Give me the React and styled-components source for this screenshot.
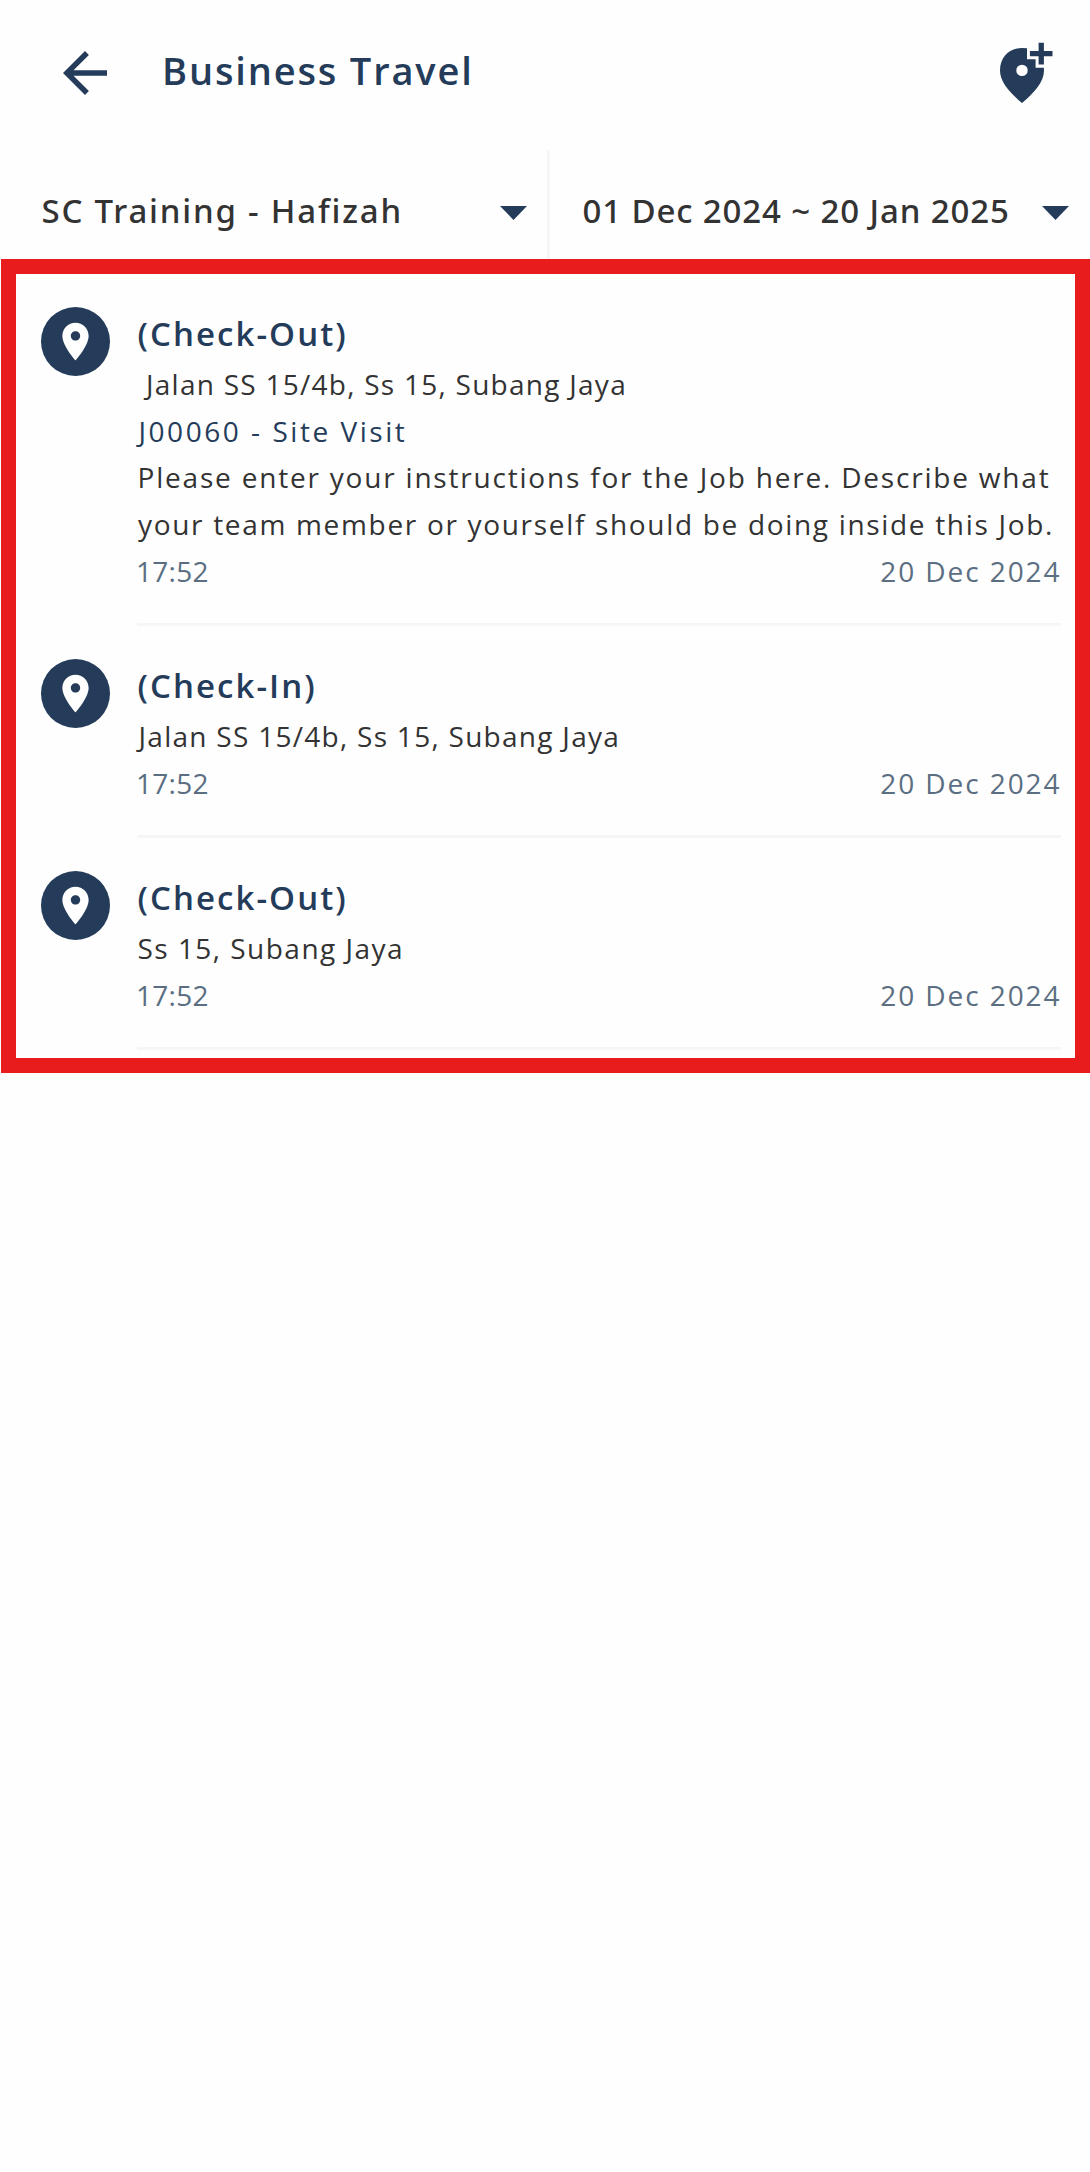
import React from "react";
import styled, { createGlobalStyle } from "styled-components";

const NAVY = "#243c5a";

const GlobalStyle = createGlobalStyle`
  * { box-sizing: border-box; }
  body {
    margin: 0;
    background: #fefefe;
    color: #333333;
    font-family: "Open Sans", "Noto Sans", sans-serif;
  }
`;

const Screen = styled.main`
  width: 1090px;
  min-height: 2172px;
  background: #fefefe;
`;

const Header = styled.header`
  display: flex;
  align-items: flex-start;
  height: 150px;
  padding: 40px 37px 0 52px;
`;

const IconButton = styled.button`
  display: block;
  flex: none;
  padding: 0;
  border: 0;
  background: none;
  color: ${NAVY};
  line-height: 0;
`;

const Title = styled.h1`
  flex: 1;
  margin: 0 0 0 44px;
  font-size: 38px;
  font-weight: 600;
  line-height: 60px;
  letter-spacing: 1.85px;
  color: ${NAVY};
`;

const Filters = styled.div`
  display: grid;
  grid-template-columns: 547px 1fr;
  height: 109px;
`;

const Filter = styled.button`
  display: flex;
  align-items: center;
  justify-content: space-between;
  padding: 12px ${(p) => p.$right}px 0 ${(p) => p.$left}px;
  border: 0;
  border-left: ${(p) => (p.$divided ? "3px solid #f6f6f6" : "0")};
  background: none;
  color: #333333;
  font: 500 33px/50px "Noto Sans", "Open Sans", sans-serif;
  letter-spacing: ${(p) => p.$tracking}px;
  white-space: nowrap;
`;

const Caret = styled.svg`
  flex: none;
  width: 27px;
  height: 14px;
  margin-top: 5px;
  fill: ${NAVY};
`;

const List = styled.ul`
  height: 814px;
  margin: 0 0 0 1px;
  padding: 0 14px 0 25px;
  border: 15px solid #e81c1c;
  list-style: none;
`;

const Item = styled.li`
  display: flex;
  gap: 27px;
  padding-top: 33px;
`;

const Badge = styled.span`
  display: flex;
  flex: none;
  align-items: center;
  justify-content: center;
  width: 69px;
  height: 69px;
  border-radius: 50%;
  background: ${NAVY};
`;

const Body = styled.div`
  flex: 1;
  min-width: 0;
  padding-bottom: 28.67px;
  border-bottom: 3px solid #f6f6f6;
`;

const Status = styled.h2`
  margin: 0;
  padding: 0 0 1px 0.5px;
  font-size: 33px;
  font-weight: 600;
  line-height: 53px;
  letter-spacing: 2.05px;
  color: ${NAVY};
`;

const Line = styled.p`
  margin: 0;
  padding-left: ${(p) => p.$indent || 0}px;
  font-size: 28px;
  line-height: 46.67px;
  letter-spacing: ${(p) => p.$tracking}px;
  white-space: nowrap;
  color: ${(p) => (p.$job ? NAVY : "#333333")};
`;

const Meta = styled.div`
  display: flex;
  justify-content: space-between;
  font-size: 28px;
  line-height: 46.67px;
  color: #5b6e82;
`;

const Time = styled.time`
  letter-spacing: ${(p) => p.$tracking}px;
  margin: 0 -0.5px 0 -1px;
`;

const BackIcon = () => (
  <svg width="66" height="66" viewBox="0 0 24 24" fill="currentColor">
    <path d="M20 11H7.83l5.59-5.59L12 4l-8 8 8 8 1.41-1.41L7.83 13H20v-2z" />
  </svg>
);

const AddPlaceIcon = () => (
  <svg width="53" height="64" viewBox="1000 40 53 64" fill="currentColor">
    <path
      fillRule="evenodd"
      d="M1027 48.3V59.2H1035.6V67.8H1043.8Q1044 69 1044 70.5C1044 82 1034 93 1022 103C1010 93 1000 82 1000 70.5C1000 57 1009.500 48 1022 48Q1025 48 1027 48.300ZM1022 64.700A5.700 5.700 0 1 0 1022 76.100A5.700 5.700 0 1 0 1022 64.700Z"
    />
    <path d="M1038.600 42.700h5.300v8.300h8.600v5.200h-8.600v8.300h-5.300v-8.300h-8.700v-5.200h8.700z" />
  </svg>
);

const PlaceIcon = () => (
  <svg width="45" height="45" viewBox="0 0 24 24" fill="#ffffff">
    <path d="M12 2C8.130 2 5 5.130 5 9c0 5.250 7 13 7 13s7-7.750 7-13c0-3.870-3.130-7-7-7zm0 9.500c-1.380 0-2.500-1.120-2.500-2.500s1.120-2.500 2.500-2.500 2.500 1.120 2.500 2.500-1.120 2.500-2.500 2.500z" />
  </svg>
);

const DropCaret = () => (
  <Caret viewBox="0 0 27 14">
    <path d="M0 0H27L13.500 14z" />
  </Caret>
);

const ENTRIES = [
  {
    status: "(Check-Out)",
    lines: [
      { text: "Jalan SS 15/4b, Ss 15, Subang Jaya", tracking: 1.26, indent: 9 },
      { text: "J00060 - Site Visit", tracking: 2.53, indent: 1.5, job: true },
      { text: "Please enter your instructions for the Job here. Describe what", tracking: 1.8, indent: 0.5 },
      { text: "your team member or yourself should be doing inside this Job.", tracking: 1.68, indent: 1 },
    ],
    time: "17:52",
    date: "20 Dec 2024",
  },
  {
    status: "(Check-In)",
    lines: [{ text: "Jalan SS 15/4b, Ss 15, Subang Jaya", tracking: 1.28, indent: 1.5 }],
    time: "17:52",
    date: "20 Dec 2024",
  },
  {
    status: "(Check-Out)",
    lines: [{ text: "Ss 15, Subang Jaya", tracking: 1.47, indent: 0.5 }],
    time: "17:52",
    date: "20 Dec 2024",
  },
];

export default function App() {
  return (
    <Screen>
      <GlobalStyle />
      <Header>
        <IconButton aria-label="Back">
          <BackIcon />
        </IconButton>
        <Title>Business Travel</Title>
        <IconButton aria-label="Add location">
          <AddPlaceIcon />
        </IconButton>
      </Header>
      <Filters>
        <Filter $left={41.5} $right={20} $tracking={1.8}>
          SC Training - Hafizah
          <DropCaret />
        </Filter>
        <Filter $divided $left={32.5} $right={21} $tracking={0.88}>
          01 Dec 2024 ~ 20 Jan 2025
          <DropCaret />
        </Filter>
      </Filters>
      <List>
        {ENTRIES.map((entry, i) => (
          <Item key={i}>
            <Badge>
              <PlaceIcon />
            </Badge>
            <Body>
              <Status>{entry.status}</Status>
              {entry.lines.map((line) => (
                <Line key={line.text} $tracking={line.tracking} $indent={line.indent} $job={line.job}>
                  {line.text}
                </Line>
              ))}
              <Meta>
                <Time $tracking={0.3}>{entry.time}</Time>
                <Time $tracking={1.93}>{entry.date}</Time>
              </Meta>
            </Body>
          </Item>
        ))}
      </List>
    </Screen>
  );
}
